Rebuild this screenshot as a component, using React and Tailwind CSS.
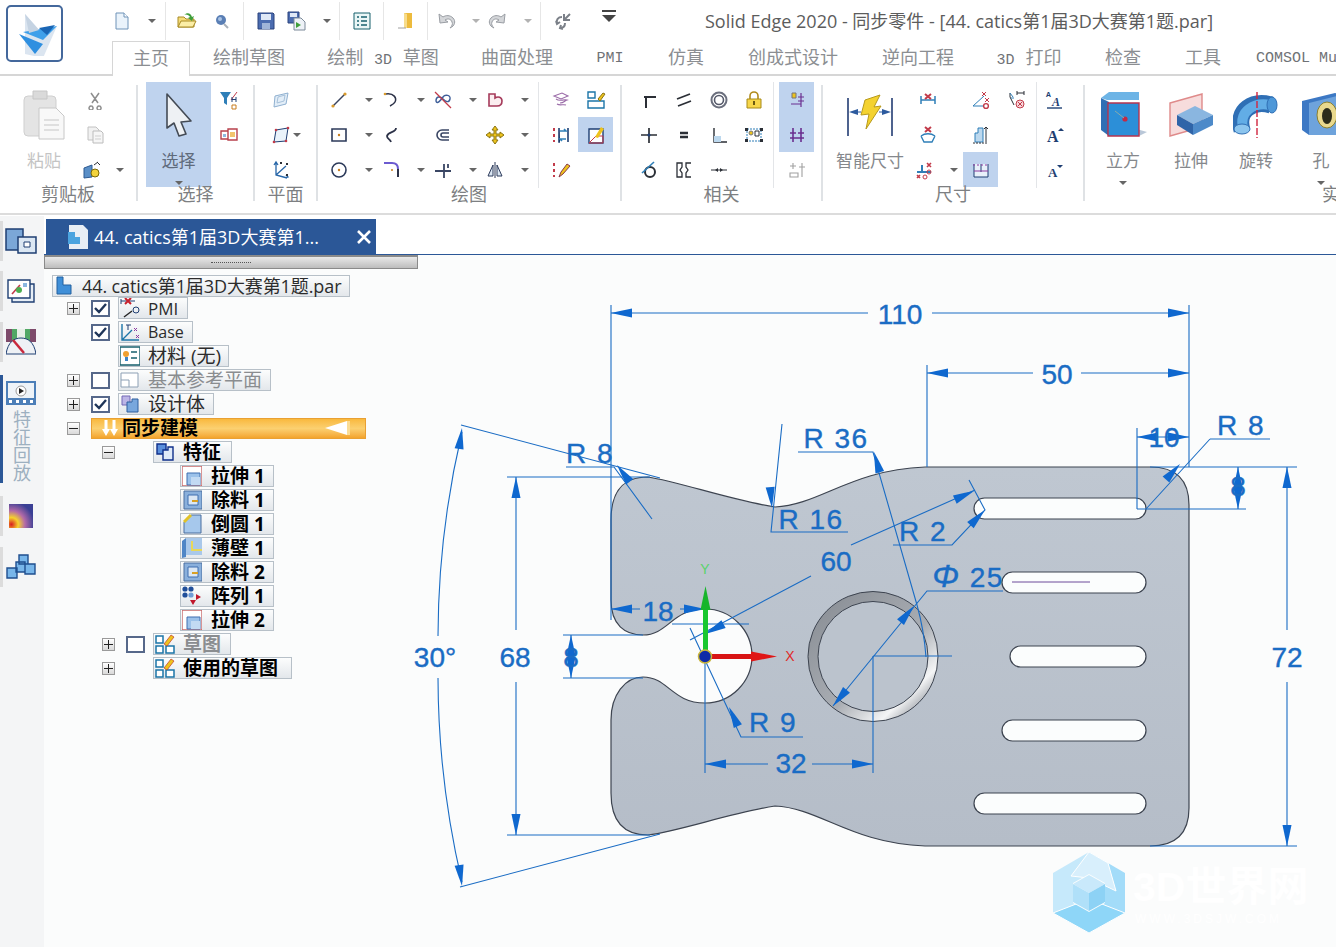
import React from 'react';

// ── Small toolbar icons (20 x 20) ────────────────────────────────────────────
const NAVY = '#1f3f73';
const RED = '#c23b4a';
const DARK = '#2b2f36';
const YEL = '#eec31c';

const ICONS = {
  newDoc: <><path d="M4 2h8l4 4v12H4z" fill="#eaf3fb" stroke="#6f93b8" /><path d="M12 2v4h4" fill="#fff" stroke="#6f93b8" /></>,
  open: <><path d="M1 16V6h6l2 2h8v8z" fill="#f5dc78" stroke="#a88a24" /><path d="M1 16l3-6h15l-3 6z" fill="#fbeea6" stroke="#a88a24" /><path d="M7 4c3-3 7-2 8 2l2-1-2 5-4-3 2-1c-1-2-4-3-6-2z" fill="#3f9e3a" /></>,
  globe: <><circle cx="9" cy="9" r="5" fill="#5a7fb5" /><circle cx="8" cy="8" r="2" fill="#a9c3e4" /><path d="M12 13l4 4" stroke="#aab1ba" strokeWidth="2" /></>,
  save: <><path d="M2 2h15l1 1v15H2z" fill="#4b6cb0" stroke="#2b437d" /><path d="M5 3h10v6H5z" fill="#dfe8f6" /><path d="M6 12h8v6H6z" fill="#9fb4d8" /></>,
  saveAs: <><path d="M1 1h11v11H1z" fill="#4b6cb0" stroke="#2b437d" /><path d="M3 2h7v4H3z" fill="#dfe8f6" /><path d="M7 7h7l4 4v8H7z" fill="#eef2f7" stroke="#7c8a99" /><path d="M9 11l5 3-5 3z" fill="#3f9e3a" /></>,
  list: <><path d="M2 2h16v16H2z" fill="#eaf6f6" stroke="#17606d" /><path d="M5 6h2M9 6h6M5 10h2M9 10h6M5 14h2M9 14h6" stroke="#17606d" strokeWidth="1.4" /></>,
  door: <><path d="M9 2h8v15H9z" fill="#edbb3d" /><path d="M9 2l3 1v14H9z" fill="#f7dc8c" /><path d="M3 17h8" stroke="#a0a0a0" /></>,
  undo: <path d="M3 3l1 9 8-1-3-2c3-2 6-1 7 2 1 2 0 4-2 6 5-2 6-7 3-10-3-3-7-3-10-1z" fill="#d4d6d9" stroke="#9a9ea4" />,
  redo: <path d="M17 3l-1 9-8-1 3-2c-3-2-6-1-7 2-1 2 0 4 2 6-5-2-6-7-3-10 3-3 7-3 10-1z" fill="#d4d6d9" stroke="#9a9ea4" />,
  swap: <path d="M11 3v6h6M11 9l6-6M9 6c-4 0-6 3-5 6M3 10l1 3 3-2M12 12c0 3-2 5-5 5M10 18l-3-1 1-3" fill="none" stroke="#7b8088" strokeWidth="2" />,
  menu: <><path d="M3 3h14" stroke="#444" strokeWidth="2" /><path d="M3 7h14l-7 7z" fill="#444" /></>,
  scissors: <path d="M6 3l7 10M14 3L7 13M6 16a2 2 0 1 0 .1 0M14 16a2 2 0 1 0 .1 0" fill="none" stroke="#8f8f8f" strokeWidth="1.5" />,
  copy: <><path d="M3 2h8l3 3v10H3z" fill="#f1f1f1" stroke="#c2c2c2" /><path d="M8 6h8l2 2v10H8z" fill="#f6f6f6" stroke="#bcbcbc" /><path d="M10 11h6M10 14h6" stroke="#cfcfcf" /></>,
  clipLink: <><path d="M2 8l8-3v12l-8 1z" fill="#5a8fc7" stroke="#2d5a92" /><circle cx="13" cy="13" r="4" fill="#f2d33c" stroke="#7d6a08" /><path d="M15 2l3 3M12 5l4-3" stroke={DARK} /></>,
  filter: <><path d="M1 2h11l-4 6v7l-3-2V8z" fill="#2f7fb8" /><path d="M12 10l6-8" stroke={RED} /><path d="M13 7v5M17 7v5M13 9.5h4" stroke={NAVY} /><path d="M13 15h4v4h-4z" fill="none" stroke="#c77d1f" /></>,
  box2: <><path d="M2 6h7v8H2zM9 4h9v11H9z" fill="#fff" stroke="#b8404c" strokeWidth="1.4" /><path d="M11 7h5v5h-5z" fill="#f2c46c" /><path d="M4 9h3v3H4z" fill="#8fb8e0" /></>,
  plane: <><path d="M4 6l13-3-2 11-12 3z" fill="#e3eef8" stroke="#8fb0d0" /><path d="M7 7l7-2-1 6-7 2z" fill="none" stroke="#a7c1da" /></>,
  plane2: <><path d="M5 5l12-2-2 13-12 1z" fill="#eaf3fb" stroke={NAVY} /><circle cx="5" cy="5" r="1.3" fill={RED} /><circle cx="17" cy="3" r="1.3" fill={RED} /><circle cx="3" cy="17" r="1.3" fill={RED} /><circle cx="15" cy="16" r="1.3" fill={RED} /></>,
  axes: <><path d="M5 3v12l11 3M5 15l10-9M3 5l2-3 2 3M14 18l3-1-2-2" fill="none" stroke="#2766a8" strokeWidth="1.3" /><path d="M9 2l2 2M11 2L9 4M15 3l2 2M17 3l-2 2M15 14l2 2M17 14l-2 2" stroke={DARK} /></>,
  line: <><path d="M4 16L16 4" stroke="#39425c" strokeWidth="1.5" /><circle cx="4" cy="16" r="1.6" fill="#d89a2c" /><circle cx="16" cy="4" r="1.6" fill="#d89a2c" /></>,
  arc: <><path d="M5 4c8-1 11 4 9 8-1 2-3 3-5 4" fill="none" stroke="#2c3248" strokeWidth="1.5" /><circle cx="4" cy="4" r="1.3" fill="#d89a2c" /></>,
  cross: <><path d="M3 11c0-5 4-5 7-2s6 4 7 0-5-5-7-2-6 8-7 4z" fill="none" stroke="#3f5f9a" strokeWidth="1.4" /><path d="M2 2l16 16" stroke={RED} strokeWidth="1.2" /></>,
  shape: <path d="M4 4h6v4c3-2 7-1 7 3s-2 5-5 5H4z" fill="#fbeef0" stroke="#a53a5a" strokeWidth="1.6" />,
  rect: <><path d="M3 4h14v12H3z" fill="#fff" stroke="#2c3a5a" strokeWidth="1.6" /><circle cx="10" cy="10" r="1.2" fill="#c77d1f" /></>,
  curve: <path d="M15 3c0 5-8 3-9 8 0 3 3 3 4 6" fill="none" stroke="#2c3248" strokeWidth="1.8" />,
  offset: <path d="M16 5H9a5 5 0 0 0 0 10h7M16 8h-6a2 2 0 0 0 0 4h6" fill="none" stroke="#3a4664" strokeWidth="1.6" />,
  move: <path d="M10 1l3 4h-2v4h4V7l4 3-4 3v-2h-4v4h2l-3 4-3-4h2v-4H5v2l-4-3 4-3v2h4V5H7z" fill={YEL} stroke="#8a7412" />,
  circle: <><circle cx="10" cy="10" r="7" fill="#fff" stroke="#2c3a5a" strokeWidth="1.6" /><circle cx="10" cy="10" r="1.2" fill="#c77d1f" /></>,
  fillet: <><path d="M3 3h8c4 0 6 2 6 6" fill="none" stroke="#6c5bd0" strokeWidth="2" /><path d="M17 9v8" stroke="#2c3248" strokeWidth="2" /><circle cx="11" cy="10" r="1" fill="#c77d1f" /></>,
  trimLine: <path d="M2 11h16M11 4v14M15 4v4" fill="none" stroke="#3a4664" strokeWidth="1.8" />,
  mirror: <><path d="M10 2v16" stroke="#2c3a5a" /><path d="M8 5v11H3zM12 5v11h5z" fill="#dbe7f3" stroke="#2c3a5a" /></>,
  sketchA: <path d="M3 6l8-3 6 3-7 3zM5 9c4 3 7 0 11 1-3 1-3 3-7 3M6 14c3 2 6 0 9 1" fill="none" stroke="#9b6ca8" strokeWidth="1.1" />,
  sketchB: <><path d="M2 2h7v6H2zM2 11h16v7H2z" fill="#fff" stroke="#1c75a8" strokeWidth="1.4" /><path d="M12 9l5-6 2 1-5 7z" fill={YEL} stroke="#8a7412" /></>,
  dots: <><path d="M3 3v3M3 9v3M3 15v2" stroke={RED} strokeWidth="2" /><path d="M8 3v14h1M17 3v14" stroke={NAVY} strokeWidth="1.6" /><path d="M9 6h6l-2-2M15 14H9l2 2" fill="none" stroke="#2f7fb8" strokeWidth="1.6" /></>,
  editBox: <><path d="M3 4h14v14H3z" fill="#fff" stroke="#1f3f73" strokeWidth="1.4" /><path d="M3 18l7-7h7v7z" fill="none" stroke={RED} /><path d="M9 12l6-10 3 2-6 9z" fill={YEL} /></>,
  pencil: <><path d="M3 3v3M3 9v3M3 15v2" stroke={RED} strokeWidth="2" /><path d="M8 17l2-5 6-8 3 2-7 8z" fill={YEL} stroke="#8a3a4a" /></>,
  corner: <path d="M7 18V7h10M5 7h4" fill="none" stroke={DARK} strokeWidth="2" />,
  parallel: <path d="M3 9l13-5M4 16l13-5" stroke={DARK} strokeWidth="1.8" />,
  concentric: <><circle cx="10" cy="10" r="7.5" fill="none" stroke="#6b6f7d" strokeWidth="2" /><circle cx="10" cy="10" r="4.5" fill="none" stroke="#55596a" strokeWidth="1.6" /></>,
  lock: <><path d="M6 9V6a4 4 0 0 1 8 0v3" fill="none" stroke="#b08a1c" strokeWidth="1.6" /><path d="M3 9h14v9H3z" fill="#f7d64a" stroke="#a78a18" /><path d="M9 11h2v4H9z" fill="#6b5a12" /></>,
  plus: <><path d="M2 10h16M10 3v15" stroke={DARK} strokeWidth="1.7" /><circle cx="10" cy="10" r="1.6" fill={NAVY} /></>,
  equal: <path d="M6 8h8M6 12h8" stroke={DARK} strokeWidth="2.4" />,
  perp: <><path d="M5 3v14h13" fill="none" stroke={DARK} strokeWidth="1.4" /><path d="M5 11h7v6H5z" fill="#bcd8ee" /></>,
  rigid: <><path d="M3 4h14v12H3z" fill="none" stroke="#2f7fb8" strokeDasharray="2 1" /><path d="M1 3h3v3H1zM16 3h3v3h-3zM1 14h3v3H1zM16 14h3v3h-3z" fill={DARK} /><circle cx="7" cy="8" r="2" fill={YEL} stroke="#777" /><path d="M11 6h4v5h-4z" fill="none" stroke={DARK} /></>,
  tangent: <><circle cx="11" cy="12" r="5" fill="none" stroke={DARK} strokeWidth="2" /><path d="M3 13L15 2" stroke="#2f7fb8" strokeWidth="1.6" /></>,
  symm: <path d="M3 3h5v4L6 10l2 3v4H3zM17 3h-5v4l2 3-2 3v4h5" fill="none" stroke={DARK} strokeWidth="1.3" />,
  horiz: <><path d="M2 10h16" stroke={DARK} /><path d="M6 10l3-2v4zM14 10l-3-2v4z" fill={DARK} /></>,
  relA: <><path d="M5 3h4v5H5z" fill={YEL} stroke="#777" /><path d="M14 3v14M11 7h6M11 11h6M4 14h10" stroke="#6b2f8f" strokeWidth="1.2" /></>,
  relB: <path d="M6 3v14M14 3v14M3 8h6M11 8h6M3 13h14" stroke="#6b2f8f" strokeWidth="1.6" />,
  relC: <path d="M6 3v6M3 6l6 0M15 3v14M12 7h6M3 13h8v4H3z" fill="none" stroke="#a0a0a0" strokeWidth="1.1" />,
  dimA: <><path d="M3 6v8M17 6v8M3 10h14" fill="none" stroke="#2f7fb8" strokeWidth="1.5" /><path d="M7 4l6 5M13 4L7 9" stroke={RED} strokeWidth="2" /></>,
  dimB: <><path d="M3 11l3 6h8l3-6M3 11c4-3 10-3 14 0" fill="none" stroke="#2f7fb8" strokeWidth="1.4" /><path d="M7 2l6 5M13 2L7 7" stroke={RED} strokeWidth="2" /></>,
  dimC: <><path d="M3 12h14M8 5v7" stroke="#2f7fb8" strokeWidth="2" /><path d="M13 3l4 4M17 3l-4 4M3 15l3 3M6 15l-3 3" stroke={RED} strokeWidth="1.6" /><circle cx="15" cy="12" r="2" fill="none" stroke={RED} /><circle cx="11" cy="17" r="2" fill="none" stroke={RED} /></>,
  dimD: <><path d="M2 16L13 6M2 16h11" fill="none" stroke="#2f7fb8" /><path d="M11 2l4 4M15 2l-4 4" stroke={RED} /><path d="M14 8l4 4M18 8l-4 4" stroke={RED} /><circle cx="15" cy="16" r="2.4" fill="none" stroke={RED} strokeWidth="1.4" /></>,
  dimE: <><path d="M4 3v4l4 8" fill="none" stroke={DARK} /><path d="M4 3l3 4M5 8h3" stroke="#2f7fb8" /><circle cx="14" cy="14" r="4" fill="#f7d8dc" stroke={RED} /><path d="M12 12l4 4M16 12l-4 4" stroke={RED} /><path d="M11 3h7M11 1v4M18 1v4" stroke={DARK} /></>,
  dimF: <><path d="M4 8h3V3h5v14H4z" fill="#bcd8ee" stroke="#2f7fb8" /><path d="M15 2v15M13 4l2-2 2 2" fill="none" stroke={DARK} /><path d="M2 18h14" stroke={DARK} strokeDasharray="2 1" /></>,
  dimG: <><path d="M3 4v13h14V4M10 4v8" fill="#e8f0fa" stroke={NAVY} /><path d="M2 5h16" stroke="#8d3aa0" strokeDasharray="2 2" /><path d="M3 11h14" stroke="#8d3aa0" /></>,
  textA: <><text x="1" y="7" fontSize="7" fill={NAVY} fontWeight="700">A</text><text x="7" y="16" fontSize="12" fill={NAVY} fontWeight="700" fontStyle="italic" fontFamily="Liberation Serif">A</text><path d="M2 18h15" stroke={NAVY} strokeWidth="1.4" /></>,
  textUp: <><text x="2" y="17" fontSize="16" fill={NAVY} fontWeight="700" fontFamily="Liberation Serif">A</text><path d="M13 6l3-3 3 3z" fill={NAVY} /></>,
  textDn: <><text x="3" y="17" fontSize="13" fill={NAVY} fontWeight="700" fontFamily="Liberation Serif">A</text><path d="M12 5l3 3 3-3z" fill={NAVY} /></>,
};

const Ic = ({ n, s = 20 }) => (
  <svg width={s} height={s} viewBox="0 0 20 20" className="block shrink-0">{ICONS[n]}</svg>
);

const Caret = ({ className = '' }) => (
  <span className={`block w-0 h-0 shrink-0 border-x-[4px] border-x-transparent border-t-[4px] border-t-[#666] ${className}`} />
);

const Cell = ({ n, on, w = 'w-[35px]' }) => (
  <div className={`${w} h-[35px] shrink-0 flex items-center justify-center ${on ? 'bg-[#bfd3ee]' : ''}`}>
    {n && <Ic n={n} />}
  </div>
);

// icon + dropdown caret, 52px wide column used by the drawing tools
const DrawCol = ({ items }) => (
  <div className="w-[52px] shrink-0 flex flex-col">
    {items.map(([n, caret]) => (
      <div key={n} className="h-[35px] flex items-center">
        <Cell n={n} />
        {caret ? <Caret className="ml-[9px]" /> : null}
      </div>
    ))}
  </div>
);

const Col = ({ items, onIdx = [] }) => (
  <div className="w-[35px] shrink-0 flex flex-col">
    {items.map((n, i) => <Cell key={i} n={n} on={onIdx.includes(i)} />)}
  </div>
);

const Sep = () => <div className="w-[2px] h-[116px] mt-[9px] bg-[#dfe2e5] shrink-0" />;
const ShortSep = ({ className = '' }) => <div className={`w-px h-[106px] bg-[#e3e5e8] shrink-0 ${className}`} />;

const Group = ({ w, label, children }) => (
  <div className={`${w} shrink-0 flex flex-col`}>
    <div className="h-[105px] mt-[6px] flex">{children}</div>
    <div className="-mt-[5px] h-[24px] flex items-center justify-center text-[18px] text-[#7d7f82] leading-none">{label}</div>
  </div>
);

const BigBtn = ({ w, label, caret, on, children }) => (
  <div className={`${w} h-[105px] shrink-0 flex flex-col items-center ${on ? 'bg-[#bfd3ee]' : ''}`}>
    <div className="h-[65px] flex items-center justify-center">{children}</div>
    <div className={`h-[26px] flex items-center text-[17px] leading-none ${on ? 'text-[#5f6b7c]' : 'text-[#85888c]'}`}>{label}</div>
    {caret && <Caret className="mt-[8px]" />}
  </div>
);

// ── Large ribbon drawings ────────────────────────────────────────────────────
const Paste = () => (
  <svg width="44" height="50" viewBox="0 0 44 50">
    <rect x="2" y="6" width="32" height="40" rx="4" fill="#e4e4e4" stroke="#cfcfcf" />
    <path d="M11 1h14v8H11z" fill="#dadada" stroke="#c6c6c6" />
    <path d="M17 18h17l8 8v23H17z" fill="#f8f8f8" stroke="#c8c8c8" />
    <path d="M22 30h15M22 35h15M22 40h15" stroke="#d6d6d6" strokeWidth="1.4" />
  </svg>
);
const Cursor = () => (
  <svg width="28" height="44" viewBox="0 0 28 44">
    <path d="M2 1l24 27-10 1 5 12-7 2-5-13-7 5z" fill="#eef1f4" stroke="#444b55" strokeWidth="1.6" strokeLinejoin="round" />
  </svg>
);
const Bolt = () => (
  <svg width="48" height="46" viewBox="0 0 48 46">
    <path d="M2 6v38M46 6v38" stroke="#243d73" strokeWidth="1.6" />
    <path d="M3 20l9-3v6zM45 20l-9-3v6z" fill="#2c5a9e" />
    <path d="M12 20h3M33 20h3" stroke="#2c5a9e" />
    <path d="M19 8l15-5-6 12 7-1-15 23 3-15-8 1z" fill="#f4d22f" stroke="#b79a1d" />
  </svg>
);
const Cube = () => (
  <svg width="48" height="46" viewBox="0 0 48 46">
    <path d="M34 36l14 4-8 4H14z" fill="#b9c7d8" />
    <path d="M2 6l8-6h30v8L8 8z" fill="#6db4e6" />
    <path d="M2 6l8 4v34L2 38z" fill="#2f6fb5" />
    <path d="M9 11h31v33H9z" fill="#2c8fd8" stroke="#b5344f" strokeWidth="1.4" />
    <circle cx="26" cy="27" r="2.6" fill="#c22a45" />
    <path d="M16 19l9 7" stroke="#8aa" />
  </svg>
);
const Extrude = () => (
  <svg width="46" height="44" viewBox="0 0 46 44">
    <path d="M2 10L34 1v33L2 43z" fill="#f7dcdc" stroke="#df8a8a" strokeWidth="1.4" />
    <path d="M9 22L27 13l18 9-20 9z" fill="#8ab6e0" />
    <path d="M9 22l16 9v11L9 32z" fill="#2f64a8" />
    <path d="M25 31l20-9v10l-20 10z" fill="#4d8ac9" />
  </svg>
);
const Revolve = () => (
  <svg width="46" height="46" viewBox="0 0 46 46">
    <path d="M9 38C3 18 20 8 38 13" fill="none" stroke="#2f6fb5" strokeWidth="17" />
    <path d="M10 36C6 19 21 10 37 13" fill="none" stroke="#62ade6" strokeWidth="10" />
    <ellipse cx="9" cy="37" rx="8" ry="5" fill="#8cc5ee" stroke="#2f6fb5" />
    <ellipse cx="39" cy="13" rx="5" ry="8" fill="#4d97d8" stroke="#2f6fb5" />
    <path d="M24 0v46" stroke="#d1263f" strokeWidth="1.4" strokeDasharray="7 2" />
  </svg>
);
const Hole = () => (
  <svg width="40" height="46" viewBox="0 0 40 46">
    <path d="M1 9L34 1l6 2v40H8L1 38z" fill="#3c78c4" />
    <path d="M8 11l32-8v40H8z" fill="#6ea3dc" />
    <ellipse cx="26" cy="23" rx="10" ry="13" fill="#e9d98e" stroke="#8c8030" />
    <ellipse cx="26" cy="24" rx="5" ry="8" fill="#2c2c1a" />
  </svg>
);
const Logo = () => (
  <svg width="44" height="44" viewBox="0 0 44 44">
    <path d="M12 2l16 18 16-6-14 32-18-4z" fill="#dbe5f0" />
    <path d="M6 22l24 10-8 10z" fill="#2f8fe0" />
    <path d="M10 20l34-6-14 14z" fill="#3fa0ea" />
    <path d="M26 16l16-3-8 10z" fill="#1a66b5" />
    <path d="M12 2l14 16-10 3z" fill="#c5d3e2" />
  </svg>
);

// ── Header ───────────────────────────────────────────────────────────────────
const QSep = ({ className }) => <div className={`w-px h-[38px] bg-[#e6e6e6] shrink-0 ${className}`} />;
const Q = ({ n, className = '' }) => <div className={`w-[20px] shrink-0 ${className}`}><Ic n={n} /></div>;

const Lat = ({ children }) => <span className="text-[15px] text-[#6f7276]">{children}</span>;

const TABS = [
  ['w-[118px]', '绘制草图'],
  ['w-[150px]', <span className="whitespace-pre">绘制 <Lat>3D</Lat> 草图</span>],
  ['w-[118px]', '曲面处理'],
  ['w-[68px]', <Lat>PMI</Lat>],
  ['w-[84px]', '仿真'],
  ['w-[130px]', '创成式设计'],
  ['w-[120px]', '逆向工程'],
  ['w-[102px]', <span className="whitespace-pre"><Lat>3D</Lat> 打印</span>],
  ['w-[86px]', '检查'],
  ['w-[74px]', '工具'],
];

function Header() {
  return (
    <header className="h-[76px] shrink-0 flex border-b-2 border-[#d6d6d6]">
      <div className="w-[112px] shrink-0 pl-[6px] pt-[5px]">
        <div className="w-[57px] h-[57px] rounded-[5px] border-2 border-[#44689c] bg-white flex items-center justify-center">
          <Logo />
        </div>
      </div>
      <div className="flex-1 min-w-0 flex flex-col">
        <div className="h-[41px] flex items-center">
          <Q n="newDoc" />
          <Caret className="ml-[16px]" />
          <QSep className="ml-[9px]" />
          <Q n="open" className="ml-[11px]" />
          <Q n="globe" className="ml-[15px]" />
          <QSep className="ml-[11px]" />
          <Q n="save" className="ml-[12px]" />
          <Q n="saveAs" className="ml-[11px]" />
          <Caret className="ml-[16px]" />
          <QSep className="ml-[8px]" />
          <Q n="list" className="ml-[12px]" />
          <QSep className="ml-[11px]" />
          <Q n="door" className="ml-[11px]" />
          <QSep className="ml-[12px]" />
          <Q n="undo" className="ml-[8px]" />
          <Caret className="ml-[16px] opacity-50" />
          <Q n="redo" className="ml-[8px]" />
          <Caret className="ml-[16px] opacity-50" />
          <QSep className="ml-[8px]" />
          <Q n="swap" className="ml-[12px]" />
          <Q n="menu" className="ml-[26px] -mt-[6px]" />
          <div className="ml-[86px] text-[18px] text-[#5c5c5c] whitespace-nowrap leading-none">
            Solid Edge 2020 - 同步零件 - [44. catics第1届3D大赛第1题.par]
          </div>
        </div>
        <nav className="h-[33px] flex text-[18px] text-[#8b8e92] [font-family:'Liberation_Mono','Noto_Sans_CJK_SC',monospace] whitespace-nowrap">
          <div className="w-[78px] h-[35px] pt-[2px] shrink-0 bg-white border border-b-0 border-[#d6d6d6] flex items-center justify-center relative z-10">主页</div>
          {TABS.map(([w, t], i) => (
            <div key={i} className={`${w} pt-[3px] shrink-0 flex items-center justify-center`}>{t}</div>
          ))}
          <div className="pl-[16px] pt-[3px] shrink-0 flex items-center"><Lat>COMSOL Multiphysics</Lat></div>
        </nav>
      </div>
    </header>
  );
}

function Ribbon() {
  return (
    <section className="h-[139px] shrink-0 flex overflow-hidden border-b-2 border-[#dcdcdc] bg-white">
      <Group w="w-[136px]" label="剪贴板">
        <BigBtn w="w-[60px] ml-[14px]" label={<span className="text-[#c4c4c4]">粘贴</span>}><Paste /></BigBtn>
        <div className="ml-[3px] flex flex-col">
          <Cell n="scissors" />
          <Cell n="copy" />
          <div className="h-[35px] flex items-center">
            <Cell n="clipLink" w="w-[29px]" />
            <Caret className="ml-[10px]" />
          </div>
        </div>
      </Group>
      <Sep />
      <Group w="w-[115px]" label="选择">
        <BigBtn w="w-[65px] ml-[8px]" label="选择" caret on><Cursor /></BigBtn>
        <Col items={['filter', 'box2']} />
      </Group>
      <Sep />
      <Group w="w-[61px]" label="平面">
        <div className="ml-[8px] flex flex-col">
          <Cell n="plane" />
          <div className="h-[35px] flex items-center">
            <Cell n="plane2" />
            <Caret className="-ml-[5px]" />
          </div>
          <Cell n="axes" />
        </div>
      </Group>
      <Sep />
      <Group w="w-[302px]" label="绘图">
        <div className="ml-[3px] flex">
          <DrawCol items={[['line', 1], ['rect', 1], ['circle', 1]]} />
          <DrawCol items={[['arc', 1], ['curve', 0], ['fillet', 1]]} />
          <DrawCol items={[['cross', 1], ['offset', 0], ['trimLine', 1]]} />
          <DrawCol items={[['shape', 1], ['move', 1], ['mirror', 1]]} />
        </div>
        <ShortSep className="ml-[9px]" />
        <div className="ml-[4px] flex">
          <Col items={['sketchA', 'dots', 'pencil']} />
          <Col items={['sketchB', 'editBox']} onIdx={[1]} />
        </div>
      </Group>
      <Sep />
      <Group w="w-[199px]" label="相关">
        <div className="ml-[9px] flex">
          <Col items={['corner', 'plus', 'tangent']} />
          <Col items={['parallel', 'equal', 'symm']} />
          <Col items={['concentric', 'perp', 'horiz']} />
          <Col items={['lock', 'rigid']} />
        </div>
        <ShortSep className="ml-[2px]" />
        <div className="ml-[5px]">
          <Col items={['relA', 'relB', 'relC']} onIdx={[0, 1]} />
        </div>
      </Group>
      <Sep />
      <Group w="w-[260px]" label="尺寸">
        <BigBtn w="w-[88px] ml-[3px]" label="智能尺寸"><Bolt /></BigBtn>
        <div className="w-[49px] shrink-0 flex flex-col">
          <Cell n="dimA" w="w-[28px]" />
          <Cell n="dimB" w="w-[28px]" />
          <div className="h-[35px] flex items-center">
            <Cell n="dimC" w="w-[20px]" />
            <Caret className="ml-[16px]" />
          </div>
        </div>
        <Col items={['dimD', 'dimF', 'dimG']} onIdx={[2]} />
        <Col items={['dimE']} />
        <ShortSep className="ml-[3px]" />
        <Col items={['textA', 'textUp', 'textDn']} />
      </Group>
      <Sep />
      <Group w="w-[510px]" label="实体">
        <BigBtn w="w-[76px]" label="立方" caret><Cube /></BigBtn>
        <BigBtn w="w-[60px]" label="拉伸"><Extrude /></BigBtn>
        <BigBtn w="w-[70px]" label="旋转"><Revolve /></BigBtn>
        <BigBtn w="w-[60px]" label="孔" caret><Hole /></BigBtn>
      </Group>
    </section>
  );
}

// ── Left rail ────────────────────────────────────────────────────────────────
const RailBox = ({ children, className = '' }) => (
  <div className={`h-[40px] border-l-[3px] border-[#dcdcdc] flex items-center justify-center pr-[6px] ${className}`}>{children}</div>
);

function Rail() {
  return (
    <aside className="w-[44px] shrink-0 bg-[#f4f5f6] flex flex-col">
      <RailBox className="mt-[5px]">
        <svg width="32" height="26" viewBox="0 0 32 26"><path d="M1 1h17v21H1z" fill="#7ba7d7" stroke="#1f3f73" strokeWidth="1.5" /><path d="M13 9h18v16H13z" fill="#dbe7f3" stroke="#1f3f73" strokeWidth="1.5" /><path d="M19 14h6v5h-6z" fill="#fff" stroke="#1f3f73" /></svg>
      </RailBox>
      <RailBox className="mt-[10px]">
        <svg width="28" height="24" viewBox="0 0 28 24"><path d="M5 5h22v18H5z" fill="#e7eef6" stroke="#1f3f73" strokeWidth="1.4" /><path d="M1 1h22v18H1z" fill="#fff" stroke="#1f3f73" strokeWidth="1.4" /><path d="M5 15L13 6" stroke="#c23b4a" strokeWidth="1.6" /><circle cx="12" cy="11" r="3" fill="#4cae50" /><path d="M16 4h4v4h-4z" fill="#8ab6e0" /></svg>
      </RailBox>
      <RailBox className="mt-[11px]">
        <svg width="30" height="26" viewBox="0 0 30 26"><path d="M0 0h30v13H0z" fill="#7d4a6a" /><path d="M6 0h18v13H6z" fill="#52a866" /><path d="M11 0h8v9h-8z" fill="#e8f0e8" /><path d="M0 25C2 13 8 9 15 9s13 4 15 16z" fill="#eef1f5" stroke="#1f3f73" /><path d="M7 11l11 13" stroke="#c8283c" strokeWidth="2.5" /></svg>
      </RailBox>
      <div className="mt-[13px] h-[108px] border-l-[3px] border-[#2b5797] flex flex-col items-center pr-[6px]">
        <svg className="mt-[6px] shrink-0" width="30" height="24" viewBox="0 0 30 24"><path d="M0 0h30v24H0z" fill="#4d7fb8" /><path d="M2 2h26v15H2z" fill="#eef3f8" /><circle cx="15" cy="10" r="5" fill="#fff" stroke="#999" /><path d="M13 7l5 3-5 3z" fill="#222" /><path d="M3 19h3v3H3zM10 19h3v3h-3zM17 19h3v3h-3zM24 19h3v3h-3z" fill="#fff" /></svg>
        <div className="mt-[5px] text-[18px] leading-[19px] text-[#9db0c0] [writing-mode:vertical-rl] whitespace-nowrap">特征回放</div>
      </div>
      <RailBox className="mt-[13px]">
        <svg width="24" height="24" viewBox="0 0 24 24"><defs><radialGradient id="heat" cx="10%" cy="85%" r="95%"><stop offset="0" stopColor="#d81f1f" /><stop offset=".3" stopColor="#f6d22c" /><stop offset=".6" stopColor="#b36aa8" /><stop offset="1" stopColor="#3a3f94" /></radialGradient></defs><path d="M0 0h24v24H0z" fill="url(#heat)" /></svg>
      </RailBox>
      <RailBox className="mt-[11px]">
        <svg width="30" height="26" viewBox="0 0 30 26"><path d="M1 14h10v10H1zM10 8h9v10h-9zM19 10h10v10H19zM13 1h9v9h-9z" fill="#78b6ea" stroke="#1f4f8f" strokeWidth="1.4" /></svg>
      </RailBox>
    </aside>
  );
}

// ── Path finder tree ─────────────────────────────────────────────────────────
const TREE_ICONS = {
  pmi: <><path d="M1 3h14M1 1v5" stroke="#1f3f73" /><path d="M5 0l6 6M11 0L5 6" stroke="#c8202c" strokeWidth="2" /><circle cx="16" cy="12" r="3" fill="none" stroke="#1f3f73" /><path d="M4 19l8-6" stroke="#222" strokeWidth="1.4" /></>,
  base: <><path d="M2 2v16h17M2 18L12 8" fill="none" stroke="#1c75a8" strokeWidth="1.4" /><path d="M6 3h5M8 3v5" stroke="#1f3f73" /><path d="M14 6l3 3M17 6l-3 3M16 13l3 3M19 13l-3 3" stroke="#8d3aa0" /></>,
  mat: <><path d="M0 1h20v18H0z" fill="#fff" stroke="#17606d" strokeWidth="1.4" /><circle cx="6" cy="8" r="3" fill="#f0a030" /><path d="M5 11h3v4H5z" fill="#3d85c6" /><path d="M11 6h6M11 12h6" stroke="#17606d" strokeWidth="1.6" /></>,
  refPlane: <><path d="M1 3h17v14H1z" fill="#fff" stroke="#8da0b5" /><path d="M1 10h8v7" fill="none" stroke="#8da0b5" /></>,
  body: <><path d="M2 2h8v9H2z" fill="#bcb5e6" stroke="#7369b5" /><path d="M7 8h5V5h6v13H7z" fill="#78a7dd" stroke="#2f5f9f" /></>,
  file: <path d="M3 1h6v8h8v9H3z" fill="#3f8fd8" stroke="#23609f" />,
  feat: <><path d="M2 2h9v10H2z" fill="#5a8fdc" stroke="#0f2f8a" strokeWidth="1.4" /><path d="M8 8h5V5h5v13H8z" fill="#dfeaf8" stroke="#0f2f8a" strokeWidth="1.4" /></>,
  extr: <><path d="M0 0h20v20H0z" fill="#fff" stroke="#c86a6a" strokeWidth="1.4" /><path d="M5 7h13v12H5z" fill="#9cc2ea" stroke="#3f6fb0" /><path d="M9 11h9v8H9z" fill="#c2daf3" /></>,
  cut: <><path d="M2 1h18v18H2z" fill="#8ab0dc" stroke="#4a6f9f" /><path d="M6 5h10v10H6z" fill="#dbe7f4" stroke="#3f6fb0" /><path d="M10 10h6v2h-6z" fill="#d8a024" /></>,
  round: <><path d="M9 1h10v18H2V8z" fill="#a6c8ec" stroke="#4a6f9f" /><path d="M2 8l7-7" stroke="#e0c22a" strokeWidth="3" /></>,
  shell: <><path d="M0 3l4-3v19l-4 1z" fill="#4f86c6" /><path d="M4 0h16v17H4z" fill="#a9c8ea" /><path d="M9 3h2v8h9v2H9z" fill="#e8d85a" /></>,
  pattern: <><circle cx="3" cy="3" r="2.6" fill="#214f9a" /><circle cx="9" cy="3" r="2.6" fill="#214f9a" /><circle cx="3" cy="9" r="2.6" fill="#214f9a" /><circle cx="9" cy="9" r="2.6" fill="#6f9bd6" /><path d="M14 8l5 3-5 3zM8 14l3 5 3-5z" fill="#c0172c" /></>,
  sketch: <><path d="M1 2h7v7H1zM1 12h7v7H1zM11 12h8v7h-8z" fill="#fff" stroke="#1c75a8" strokeWidth="1.5" /><path d="M9 10l7-9 3 2-7 9z" fill="#eec31c" stroke="#c0392b" strokeWidth=".7" /></>,
};

const TreeBox = ({ w, icon, bold, dim, size = 'text-[19px]', iconSlot = 'w-[29px]', children }) => (
  <div className={`${w} h-[22px] shrink-0 flex items-center border border-[#b7c0c8] bg-gradient-to-b from-[#fcfdfd] to-[#e3e7eb] whitespace-nowrap leading-none ${size} ${bold ? 'font-bold' : ''} ${dim ? 'text-[#8a8d90]' : bold ? 'text-black' : 'text-[#2c2c2c]'}`}>
    <div className={`${iconSlot} shrink-0 pl-[1px]`}>
      <svg width="20" height="20" viewBox="0 0 20 20" className="block">{TREE_ICONS[icon]}</svg>
    </div>
    {children}
  </div>
);

const Expander = ({ sign }) => (
  <div className="w-[13px] h-[13px] shrink-0 border border-[#9a9a9a] bg-gradient-to-b from-white to-[#d9d9d9] flex items-center justify-center">
    <svg width="9" height="9" viewBox="0 0 9 9">
      <path d={sign === '+' ? 'M0 4.5h9M4.5 0v9' : 'M0 4.5h9'} stroke="#222" />
    </svg>
  </div>
);

const Check = ({ on }) => (
  <div className="w-[19px] h-[17px] shrink-0 border-2 border-[#56688a] bg-white flex items-center justify-center">
    {on && <svg width="13" height="11" viewBox="0 0 13 11"><path d="M1 5l4 4 7-8" fill="none" stroke="#1f3559" strokeWidth="2.4" /></svg>}
  </div>
);

// pl: where the expander slot starts, exp / chk: undefined leaves the slot empty
const Row = ({ pl, exp, chk, box }) => (
  <div className={`h-[24px] flex items-center ${pl}`}>
    <div className="w-[13px] shrink-0">{exp && <Expander sign={exp} />}</div>
    <div className="w-[19px] ml-[11px] mr-[8px] shrink-0">{chk !== undefined && <Check on={chk} />}</div>
    {box}
  </div>
);

const FEATURES = [
  ['extr', '拉伸 1'], ['cut', '除料 1'], ['round', '倒圆 1'], ['shell', '薄壁 1'],
  ['cut', '除料 2'], ['pattern', '阵列 1'], ['extr', '拉伸 2'],
];

function Tree() {
  return (
    <div className="pt-[6px] pl-[8px]">
      <TreeBox w="w-[298px]" icon="file" size="text-[18px] tracking-[-0.1px]">44. catics第1届3D大赛第1题.par</TreeBox>
      <div className="-ml-[8px] mt-[-1px]">
        <Row pl="pl-[23px]" exp="+" chk box={<TreeBox w="w-[70px]" icon="pmi" size="text-[17px]">PMI</TreeBox>} />
        <Row pl="pl-[23px]" chk box={<TreeBox w="w-[75px]" icon="base" size="text-[16px]">Base</TreeBox>} />
        <Row pl="pl-[23px]" box={<TreeBox w="w-[111px]" icon="mat">材料 (无)</TreeBox>} />
        <Row pl="pl-[23px]" exp="+" chk={false} box={<TreeBox w="w-[153px]" icon="refPlane" dim>基本参考平面</TreeBox>} />
        <Row pl="pl-[23px]" exp="+" chk box={<TreeBox w="w-[96px]" icon="body">设计体</TreeBox>} />
        <div className="h-[24px] flex items-center pl-[23px]">
          <Expander sign="-" />
          <div className="w-[275px] h-[21px] ml-[11px] flex items-center justify-between bg-gradient-to-b from-[#f9b93c] via-[#fbd070] to-[#f3a42a] border border-[#e9a033] pl-[8px] pr-[14px]">
            <div className="flex items-center">
              <svg width="20" height="18" viewBox="0 0 20 18"><path d="M6 1v10M14 1v10" stroke="#fff" strokeWidth="3" /><path d="M2 10h8l-4 7zM10 10h8l-4 7z" fill="#fff" /></svg>
              <span className="ml-[2px] text-[19px] font-bold text-black leading-none">同步建模</span>
            </div>
            <svg width="26" height="16" viewBox="0 0 26 16"><path d="M0 8l22-7v14z" fill="#fff" /><path d="M22 1h3v14h-3z" fill="#fbdc94" /></svg>
          </div>
        </div>
        <Row pl="pl-[58px]" exp="-" box={<TreeBox w="w-[79px]" icon="feat" bold>特征</TreeBox>} />
        {FEATURES.map(([icon, text]) => (
          <div key={text} className="h-[24px] flex items-center pl-[136px]">
            <TreeBox w="w-[94px]" icon={icon} bold iconSlot="w-[30px]">{text}</TreeBox>
          </div>
        ))}
        <Row pl="pl-[58px]" exp="+" chk={false} box={<TreeBox w="w-[78px]" icon="sketch" bold dim>草图</TreeBox>} />
        <Row pl="pl-[58px]" exp="+" box={<TreeBox w="w-[139px]" icon="sketch" bold>使用的草图</TreeBox>} />
      </div>
    </div>
  );
}

// ── The CAD view ─────────────────────────────────────────────────────────────
const DIM = '#1a6cc4';

const Arr = ({ x, y, a }) => (
  <polygon points="0,0 -9,-2 -21,-4.5 -21,4.5 -9,2" fill="#0f68cf" transform={`translate(${x} ${y}) rotate(${a})`} />
);

const Txt = ({ x, y, children, spacing }) => (
  <text x={x} y={y} textAnchor="middle" fontSize="28" fill={DIM} stroke={DIM} strokeWidth=".4" letterSpacing={spacing} fontFamily="Liberation Sans, Arial, sans-serif">{children}</text>
);

const SLOTS = [
  [974, 498], [1002, 572], [1010, 646], [1002, 720], [974, 793],
];

const PART =
  'M611 520 C611 492 622 477 648 477 C680 482 730 500 775 507 C820 505 850 470 925 467 L1150 467 ' +
  'Q1189 467 1189 505 L1189 808 Q1189 846 1150 846 L925 846 C850 843 820 808 775 806 C730 813 680 831 648 835 ' +
  'C622 835 611 820 611 793 L611 720 C611 695 625 677 643 677 C668 677 672 703 705 703 ' +
  'A47 47 0 0 0 705 609 C672 609 668 635 643 635 C625 635 611 625 611 600 Z';

function CadView() {
  return (
    <svg width="918" height="692" viewBox="418 255 918 692" className="block overflow-visible">
      <defs>
        <linearGradient id="partFill" x1="0" y1="0" x2="0" y2="1">
          <stop offset="0" stopColor="#bfc7d1" />
          <stop offset="1" stopColor="#b5bdc8" />
        </linearGradient>
        <linearGradient id="ringFill" x1="0.1" y1="0.1" x2="0.85" y2="0.9">
          <stop offset="0" stopColor="#8b9097" />
          <stop offset=".6" stopColor="#a9adb3" />
          <stop offset=".88" stopColor="#f4f5f6" />
          <stop offset="1" stopColor="#a7abb1" />
        </linearGradient>
      </defs>

      {/* part */}
      <path d={PART} fill="url(#partFill)" stroke="#3d4450" strokeWidth="1.2" />
      {SLOTS.map(([x, y]) => (
        <rect key={y} x={x} y={y} width={1146 - x} height="21" rx="10.5" fill="#fbfdfd" stroke="#3d4450" strokeWidth="1.2" />
      ))}
      <path d="M1012 582h78" stroke="#6d4a9a" />
      <circle cx="873" cy="656.5" r="65" fill="url(#ringFill)" stroke="#3d4450" />
      <circle cx="873" cy="656.5" r="55" fill="#bbc3cd" stroke="#3d4450" />

      {/* dimension lines */}
      <g stroke={DIM} strokeWidth="1.1" fill="none">
        <path d="M611 305V620M1189 305V467M611 313H868M932 313H1189" />
        <path d="M927 365V467M927 373H1033M1081 373H1189" />
        <path d="M1137 428V509M1137 437H1189" />
        <path d="M1150 467H1297M1137 509H1246M1238 467V509" />
        <path d="M1287 467V630M1287 682V846M1150 846H1297" />
        <path d="M507 477H650M507 835H650M516 477V630M516 682V835" />
        <path d="M461 425L660 478M460 887L660 834" />
        <path d="M462 432A900 900 0 0 0 438 636M438 678A900 900 0 0 0 462 882" />
        <path d="M563 635H643M563 678H643M571 635V678" />
        <path d="M566 467H614L652 519" />
        <path d="M848 532H771L782 424" />
        <path d="M798 452H873L917 605Q924 630 926 657" />
        <path d="M893 545H952L985 510L969 480" />
        <path d="M811 576L690 640M851 545L975 490" />
        <path d="M672 624H749M690 628L741 737H803" />
        <path d="M611 609H640M680 609H705" />
        <path d="M705 656V773M873 656V773M705 764H768M812 764H873" />
        <path d="M1003 591H927L833 706M873 656H952" />
        <path d="M1210 439H1270M1210 439L1146 509" />
      </g>

      <Arr x={611} y={313} a={180} />
      <Arr x={1189} y={313} a={0} />
      <Arr x={927} y={373} a={180} />
      <Arr x={1189} y={373} a={0} />
      <Arr x={1137} y={437} a={180} />
      <Arr x={1189} y={437} a={0} />
      <Arr x={1180} y={464} a={-48} />
      <Arr x={1238} y={467} a={-90} />
      <Arr x={1238} y={509} a={90} />
      <Arr x={1287} y={467} a={-90} />
      <Arr x={1287} y={846} a={90} />
      <Arr x={516} y={477} a={-90} />
      <Arr x={516} y={835} a={90} />
      <Arr x={462} y={428} a={-82} />
      <Arr x={462} y={886} a={82} />
      <Arr x={571} y={635} a={-90} />
      <Arr x={571} y={678} a={90} />
      <Arr x={617} y={465} a={-127} />
      <Arr x={772} y={508} a={85} />
      <Arr x={874} y={452} a={-106} />
      <Arr x={974} y={491} a={-24} />
      <Arr x={985} y={510} a={-46} />
      <Arr x={705} y={634} a={152} />
      <Arr x={729} y={707} a={-115} />
      <Arr x={611} y={609} a={180} />
      <Arr x={705} y={609} a={0} />
      <Arr x={705} y={764} a={180} />
      <Arr x={873} y={764} a={0} />
      <Arr x={914} y={606} a={-50} />
      <Arr x={833} y={706} a={130} />

      <Txt x={900} y={324}>110</Txt>
      <Txt x={1057} y={384}>50</Txt>
      <Txt x={1164} y={447}>10</Txt>
      <Txt x={1241} y={435} spacing="1.5">R 8</Txt>
      <Txt x={1238} y={496}>8</Txt>
      <Txt x={1287} y={667}>72</Txt>
      <Txt x={515} y={667}>68</Txt>
      <Txt x={435} y={667}>30°</Txt>
      <Txt x={571} y={667}>8</Txt>
      <Txt x={590} y={463} spacing="1.5">R 8</Txt>
      <Txt x={811} y={529} spacing="1.5">R 16</Txt>
      <Txt x={836} y={448} spacing="1.5">R 36</Txt>
      <Txt x={923} y={541} spacing="1.5">R 2</Txt>
      <Txt x={836} y={571}>60</Txt>
      <Txt x={658} y={621}>18</Txt>
      <Txt x={773} y={732} spacing="1.5">R 9</Txt>
      <Txt x={791} y={773}>32</Txt>
      <Txt x={968} y={587} spacing="1.5"><tspan fontStyle="italic" fontSize="32">Φ</tspan> 25</Txt>

      {/* triad */}
      <path d="M703 650V606h5v44z" fill="#19c72f" />
      <path d="M705.5 586l-5 24h10z" fill="#17b52b" />
      <path d="M710 654h44v5h-44z" fill="#d81414" />
      <path d="M777 656.5l-26-5v10z" fill="#e01616" />
      <circle cx="705" cy="656.5" r="6.5" fill="#0f2aa8" stroke="#c9b53a" strokeWidth="1.5" />
      <text x="705" y="574" textAnchor="middle" fontSize="14" fill="#58d36a" fontFamily="Liberation Sans, sans-serif">Y</text>
      <text x="790" y="661" textAnchor="middle" fontSize="14" fill="#e02a2a" fontFamily="Liberation Sans, sans-serif">X</text>

      {/* watermark */}
      <path d="M1089 852l36 21v40l-36 20z" fill="#a3dcf9" />
      <path d="M1089 852l-36 21v40l36 20z" fill="#c6e9fb" />
      <path d="M1089 852l19 11 8 28-27-13-18-2z" fill="#d8effc" stroke="#fff" />
      <path d="M1053 913l36 20 36-20-36-14z" fill="#8ed6f8" stroke="#fff" />
      <path d="M1089 874l-16 9v20l16 9 16-9v-20z" fill="#fbfdfd" />
      <path d="M1089 875l-16 9 16 9 16-9z" fill="#c9e9fb" />
      <path d="M1073 884v18l16 9v-18z" fill="#b0e0f9" />
      <path d="M1105 884v18l-16 9v-18z" fill="#8dd2f5" />
      <text x="1133" y="901" fontSize="41" fill="#ffffff" fontWeight="700" fontFamily="Liberation Sans, Noto Sans CJK SC, sans-serif">3D世界网</text>
      <text x="1135" y="923" fontSize="12" fill="#ffffff" letterSpacing="3" fontFamily="Liberation Sans, sans-serif">WWW.3DSJW.COM</text>
    </svg>
  );
}

export default function App() {
  return (
    <div className="w-[1336px] h-[947px] overflow-hidden flex flex-col bg-white [font-family:'Open_Sans','Noto_Sans_CJK_SC',sans-serif]">
      <Header />
      <Ribbon />
      <div className="flex-1 min-h-0 flex mt-px">
        <Rail />
        <main className="flex-1 min-w-0 flex flex-col bg-[#fbfcfc]">
          <div className="h-[39px] shrink-0 bg-white border-b border-[#2b5797] pt-[3px] pl-[2px]">
            <div className="w-[330px] h-[35px] bg-[#2b5797] flex items-center pl-[20px] text-white">
              <svg width="24" height="26" viewBox="0 0 24 26" className="shrink-0"><path d="M3 1h14l5 5v19H3z" fill="#e8eef5" /><path d="M2 8h7v5h5v7H2z" fill="#4aa3df" /></svg>
              <span className="ml-[4px] text-[18px] leading-none whitespace-nowrap">44. catics第1届3D大赛第1...</span>
              <svg width="14" height="14" viewBox="0 0 14 14" className="ml-[38px] shrink-0"><path d="M1 1l12 12M13 1L1 13" stroke="#fff" strokeWidth="2.6" /></svg>
            </div>
          </div>
          <div className="flex-1 min-h-0 flex">
            <div className="w-[374px] shrink-0">
              <div className="h-[14px] border border-t-2 border-[#8a8a8a] bg-gradient-to-b from-[#e9e9e9] to-[#bdbdbd] flex items-center justify-center">
                <div className="w-[40px] border-t border-dotted border-[#555]" />
              </div>
              <Tree />
            </div>
            <div className="flex-1 min-w-0">
              <CadView />
            </div>
          </div>
        </main>
      </div>
    </div>
  );
}
